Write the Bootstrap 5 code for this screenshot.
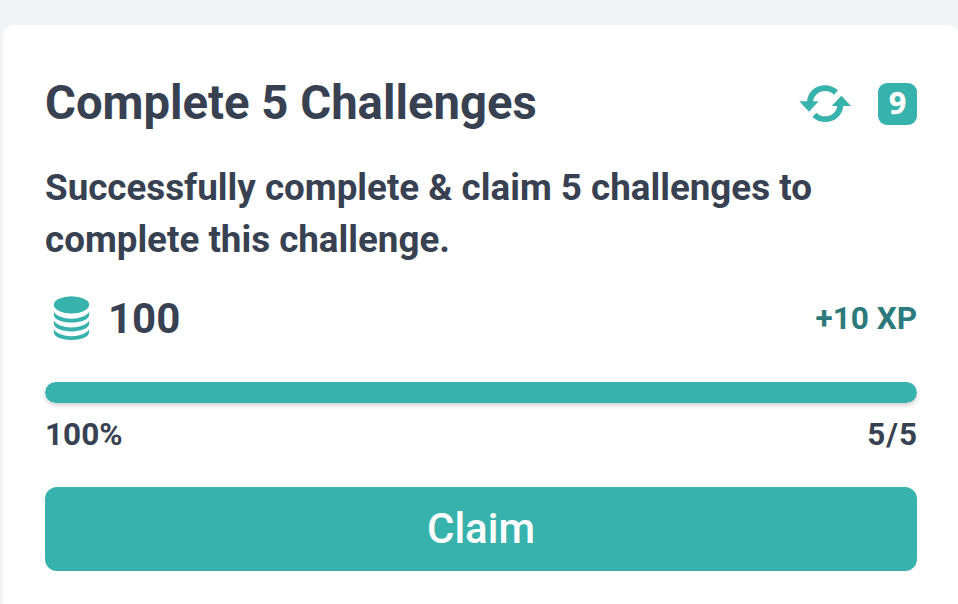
<!DOCTYPE html>
<html lang="en">
<head>
<meta charset="utf-8">
<meta name="viewport" content="width=device-width, initial-scale=1">
<title>Complete 5 Challenges</title>
<link href="https://cdn.jsdelivr.net/npm/bootstrap@5.3.0/dist/css/bootstrap.min.css" rel="stylesheet">
<style>
body{background:#f3f4f6;color:#374151;font-family:Roboto,"Liberation Sans",sans-serif}
.challenge{margin:25px -1px 0 3px;height:579px;border-radius:12px 12px 0 0;padding:50px 42px 0}
.challenge-title{font-size:47.25px;line-height:56px;padding-bottom:2px}
.level{width:39px;height:42px;border-radius:9px;background:#38b2ac;font:700 30px/39px "Open Sans",sans-serif;-webkit-text-stroke:.4px #fff}
.refresh{margin-right:27px}
.desc{font-size:36.75px;line-height:52px;margin-top:29px}
.reward{margin-top:22px;height:60px}
.coins{font-size:42px;margin-left:18px}
.xp{font-size:31.5px;color:#2c7a7b;padding-top:2px}
.meter{height:21px;margin-top:34px;border-radius:11px;box-shadow:0 2px 5px rgba(0,0,0,.2)}
.meter .progress-bar{background:#38b2ac;border-radius:11px}
.stats{font-size:31.5px;line-height:48px;margin-top:8px}
.count{letter-spacing:.9px;margin-right:-.9px}
.claim{height:84px;margin-top:28px;padding:0 0 2px;border-radius:12px;background:#38b2ac;font-size:42px;font-weight:500}
</style>
</head>
<body class="overflow-hidden">
<main class="challenge bg-white">
  <header class="d-flex align-items-center justify-content-between">
    <h1 class="challenge-title fw-bold m-0">Complete 5 Challenges</h1>
    <div class="d-flex align-items-center">
      <svg class="refresh" width="52" height="38" viewBox="58 44 156 114" fill="#38b2ac" aria-label="Refresh">
        <path d="M59 93H82C85 65 107 45 136 45C151 45 165 51 175 60L163 73C156 66 147 62 136 62C117 62 103 75 100 93H117L88 124Z"/>
        <path transform="rotate(180 136.5 100)" d="M59 93H82C85 65 107 45 136 45C151 45 165 51 175 60L163 73C156 66 147 62 136 62C117 62 103 75 100 93H117L88 124Z"/>
      </svg>
      <span class="level text-white text-center">9</span>
    </div>
  </header>
  <p class="desc fw-bold mb-0">Successfully complete &amp; claim 5 challenges to complete this challenge.</p>
  <div class="reward d-flex align-items-center justify-content-between fw-bold">
    <div class="d-flex align-items-center">
      <svg class="ms-2" width="37" height="44" viewBox="0 0 37 44" fill="#38b2ac" aria-label="Coins">
        <ellipse cx="18.5" cy="8.800" rx="17.700" ry="8.600"/>
        <path d="M.8 15.500C5 25 32 25 36.200 15.500V18.500C36.200 29.300 .8 29.300 .8 18.500Z"/>
        <path d="M.8 24.300C5 33.800 32 33.800 36.200 24.300V27.300C36.200 38.100 .8 38.100 .8 27.300Z"/>
        <path d="M.8 33C5 42.500 32 42.500 36.200 33V36C36.200 46.600 .8 46.600 .8 36Z"/>
      </svg>
      <span class="coins">100</span>
    </div>
    <span class="xp">+10 XP</span>
  </div>
  <div class="progress meter" role="progressbar" aria-valuenow="100" aria-valuemin="0" aria-valuemax="100">
    <div class="progress-bar w-100"></div>
  </div>
  <div class="stats d-flex justify-content-between fw-bold"><span>100%</span><span class="count">5/5</span></div>
  <button class="claim btn w-100 text-white border-0">Claim</button>
</main>
<script src="https://cdn.jsdelivr.net/npm/bootstrap@5.3.0/dist/js/bootstrap.bundle.min.js"></script>
</body>
</html>
